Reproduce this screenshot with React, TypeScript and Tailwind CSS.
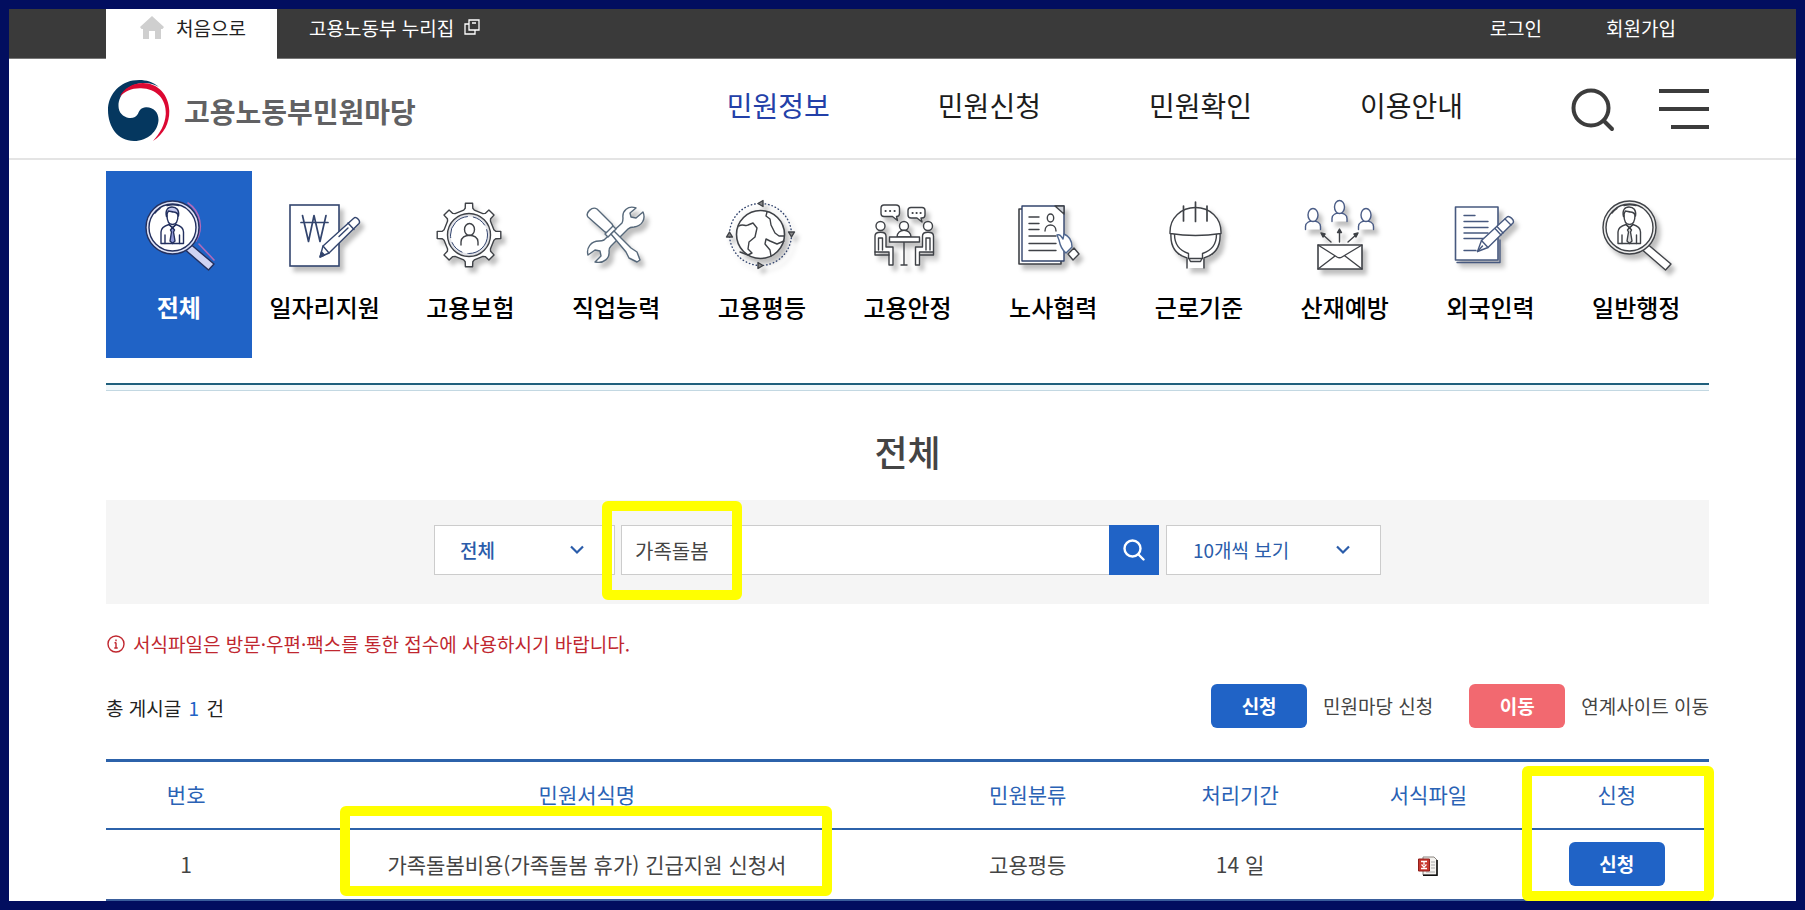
import React, { useState } from 'react';

const INK = '#3f4247';
const NAVY = '#33456e';

interface IconProps {
  active?: boolean;
}

interface Category {
  label: string;
  Icon: React.FC<IconProps>;
}

const IconFrame: React.FC<{ stroke?: string; plain?: boolean; children: React.ReactNode }> = ({
  stroke = INK,
  plain = false,
  children
}) => (
  <svg
    viewBox="0 0 76 76"
    className={`h-[76px] w-[76px] overflow-visible ${plain ? '' : 'drop-shadow-[4px_5px_2px_rgba(0,0,0,0.25)]'}`}
    fill="#fff"
    stroke={stroke}
    strokeWidth={1.4}
    strokeLinecap="round"
    strokeLinejoin="round"
    aria-hidden="true"
  >
    {children}
  </svg>
);

const MagnifierIcon: React.FC<IconProps> = ({ active = false }) => (
  <IconFrame stroke={active ? '#23305f' : INK} plain={active}>
    {active && (
      <g fill="none" stroke="#b06bb8" strokeWidth={1.6}>
        <path d="M47 5a28 28 0 0 1 8 38" />
        <path d="M58 46l15 16" />
      </g>
    )}
    <path d="M45 52.5l5.500-5.500L73 66l-5.500 6z" fill={active ? '#cfd3f3' : '#fff'} />
    <circle cx="31.500" cy="29.500" r="26.500" fill={active ? '#dfe3f7' : '#eee'} />
    <circle cx="31.500" cy="29.500" r="23.500" />
    <path d="M19 10.500a23 23 0 0 0-5 4.500M26 7.500a23 23 0 0 1 12 0" fill="none" />
    {/* person */}
    <path d="M20 45.500V34c0-4 3-6 8-7.500l3.500 3 3.500-3c5 1.500 7.500 3.500 7.500 7.500v11.500z" />
    <path d="M24 37v8.500M38.500 37v8.500" fill="none" />
    <path d="M31.500 29.500l-2 2.500 1 2-1.500 9 2.500 2.500 2.500-2.500-1.500-9 1-2z" fill={active ? '#8f96d6' : '#ddd'} />
    <path d="M28 26.500l3.500 3.500 3.500-3.500" fill="none" />
    <path d="M26 17c0 6 2 9.500 5.500 9.500S37 23 37 17" />
    <path
      d="M25.500 18.500c-1.500-6 1-9.500 5.500-9.500s7.500 3 6.500 9c-1-3-3-4-5-4-1 0-4-1-5-1-1 1-1.500 3-2 5.500z"
      fill={active ? '#c3c7ee' : '#fff'}
    />
  </IconFrame>
);

const WonIcon = () => (
  <IconFrame stroke={NAVY}>
    <rect x="3" y="7" width="49" height="61" strokeLinejoin="miter" strokeWidth={1.6} />
    <path d="M15.500 17.500l6 26 5.500-26 6 26 6-26M14 24.500h27" fill="none" strokeWidth={1.7} />
    <path d="M33 59l3-11 31-28c2-2 7 3 5 5.500L42 55z" />
    <path d="M36 48l6 7M61 25l6 6.500M52 38.500l9-8.500" fill="none" />
    <path d="M33 59l1.500-5 3 3z" fill={NAVY} />
  </IconFrame>
);

// eight teeth, four corners each
const gearPoints = Array.from({ length: 8 })
  .flatMap((_, tooth) =>
    [[-12, 25.5], [-8, 27], [-6.5, 32], [6.5, 32], [8, 27], [12, 25.5]].map(([offset, radius]) => {
      const angle = ((tooth * 45 + offset) * Math.PI) / 180;
      return `${(37 + radius * Math.sin(angle)).toFixed(1)},${(37 - radius * Math.cos(angle)).toFixed(1)}`;
    })
  )
  .join(' ');

const GearIcon = () => (
  <IconFrame>
    <polygon points={gearPoints} />
    <circle cx="37" cy="37" r="21.500" fill="#e3e4e9" />
    <circle cx="37" cy="37" r="18.500" stroke={NAVY} strokeWidth={1} strokeDasharray="30 6 14 5" />
    <ellipse cx="37.500" cy="31.500" rx="5" ry="6" />
    <path d="M29 47v-3c0-9 17-9 17 0v3" fill="none" />
  </IconFrame>
);

const ToolsIcon = () => (
  <IconFrame stroke="#56687a">
    {/* wrench */}
    <path d="M58 10c-8-3-14 3-13 10 0 2 0 3-1 5L26 42c-2 1-3 1-5 1-8 0-13 7-11 14l7-5 5 1 1 5-6 6c9 2 15-4 14-11 0-2 0-3 2-5l17-17c2-2 4-2 6-2 8-1 12-8 9-15l-7 6-5-1-1-4z" />
    {/* screwdriver */}
    <path d="M10 19c-3-4 4-11 9-8l15 15c2 3 1 5-1 7s-4 2-6 1z" />
    <path d="M27 36l8-8 3 3-8 8z" />
    <path d="M33 36l3-3 17 17 6 4 3 8-3 2-8-4-3-6z" />
  </IconFrame>
);

const GlobeIcon = () => (
  <IconFrame>
    <circle cx="36.500" cy="36.500" r="31" fill="none" stroke={NAVY} strokeWidth={1.4} strokeDasharray="0.500 3" />
    <circle cx="36.500" cy="36.500" r="24" strokeWidth={1.6} />
    <path d="M15 28c4-3 6 1 9-1l5-2 4 5-2 9-6 5-1 7 4 4-4 2-8-3" fill="none" />
    <path d="M43 14l-1 4 4 3 1 6 4 8 4 3h5M60 43l-7 3-7-3-4-2-1 5 5 6 1 6" fill="none" />
    <path d="M34 5.500l5-3v6zM39 67.500l-5 3v-6zM5.500 34l-3 5h6zM67.500 39l3-5h-6z" fill="#888" />
  </IconFrame>
);

const MeetingIcon = () => (
  <IconFrame>
    <path d="M14 7h12q3.500 0 3.500 3.500v5q0 3-3 3l1 4-5-4H14q-3 0-3-3v-5Q11 7 14 7z" />
    <path d="M41 9.500h11q3 0 3 3V17q0 3-3 3h-1l1 4-5-4h-6q-3 0-3-3v-4.500q0-3 3-3z" />
    <path d="M15.500 13h.2M20 13h.2M24.500 13h.2M42.500 15h.2M46.500 15h.2M50.500 15h.2" strokeWidth={2} />
    <circle cx="10.500" cy="28" r="4.500" />
    <path d="M5 54V38c0-5 11-5 11 0v11h7v18h-4V54z" />
    <path d="M8.500 52V40h4v12" fill="none" />
    <path d="M5 54v3h14" fill="none" />
    <circle cx="58" cy="28" r="4.500" />
    <path d="M63.500 54V38c0-5-11-5-11 0v11h-7v18h4V54z" />
    <path d="M60 52V40h-4v12M63.500 54v3H50" fill="none" />
    <circle cx="34" cy="28" r="4.500" />
    <path d="M27 39c0-9 14-9 14 0z" />
    <path d="M19.500 39h30v5h-30zM34 44v23M31 67h6" />
  </IconFrame>
);

const ContractIcon = () => (
  <IconFrame>
    <path d="M4 11h42v55H4z" strokeWidth={1.6} />
    <path d="M7 8h42v55H7z" stroke={NAVY} />
    <path d="M40 8l9 8V8z" fill="#cfd3da" />
    <path d="M14 19h10M14 25.500h10M14 31.500h10M14 38h27M14 45.500h27M14 52.500h27" strokeWidth={1.4} />
    <ellipse cx="35.500" cy="20" rx="3.200" ry="4" />
    <path d="M30 33c0-8 11-8 11 0" fill="none" />
    <path d="M42 37c3-1 4 1 6 4l1-5c5 2 8 7 8 13l-6 6c-4-3-6-8-7-13z" stroke="#4f6790" />
    <path d="M53 56l6-6 5 6-6 6z" />
  </IconFrame>
);

const HelmetIcon = () => (
  <IconFrame>
    <path d="M10 36c-1 13 7 22 17 25v9h15v-9c10-3 18-12 17-25" stroke="none" />
    <path d="M10 35c-1 14 6 22 16 25v10M59 35c1 14-6 22-16 25v10" fill="none" />
    <path d="M13.500 36c0 11 5 16 14 19.500v5M55.500 36c0 11-5 16-14 19.500v5" fill="none" />
    <path d="M28 60.500h13l-1.500 3h-10z" />
    <path d="M9 34C9 20 20 9.500 34.500 9.500S60 20 60 34v1.500q-25.500 4-51 0z" />
    <path d="M22.500 8v15M34.500 4v19.500M46 8v15" strokeWidth={1.7} />
  </IconFrame>
);

const MailPeopleIcon = () => (
  <IconFrame>
    {['translate(6 17)', 'translate(32.5 9)', 'translate(59 17)'].map(place => (
      <g key={place} transform={place} stroke="#4a5c86">
        <path d="M-7.500 14.500v-3c0-4 4-5.500 7.500-5.500s7.500 1.500 7.500 5.500v3" />
        <ellipse cx="0" cy="0" rx="5" ry="6.500" />
      </g>
    ))}
    <path d="M11 47h44v24H11z" strokeWidth={1.6} />
    <path d="M11 47l19 12q2.500 1.500 5 0l20-12M11 71l17-13M55 71L38 58" fill="none" />
    <path d="M24 44l-9-8M32.500 44V32.500M41 44l9-8" fill="none" />
    <path d="M14 35l4 1-2 3zM32.500 31l2 3.500h-4zM51 35l-4 1 2 3z" fill={INK} />
  </IconFrame>
);

const WriteIcon = () => (
  <IconFrame stroke="#47597f">
    <path d="M3.500 9H46v53H3.500z" strokeWidth={1.6} />
    <path d="M5 64.500h43V42" fill="none" />
    <path d="M12 17.500h11M12 23.500h24M12 29.500h24M12 35h24M12 40.500h20M12 52.500h12" />
    <path d="M25.500 53.500l4-11L55 19c2-2 8 3 6 6L36 49.500z" />
    <path d="M29.500 42.500l6.500 7M45 28.500l6 6.500M43 30.500l6 6.500M53 21l6 6M25.500 53.500l5-5.500" fill="none" />
  </IconFrame>
);

const CATEGORIES: Category[] = [
  { label: '전체', Icon: MagnifierIcon },
  { label: '일자리지원', Icon: WonIcon },
  { label: '고용보험', Icon: GearIcon },
  { label: '직업능력', Icon: ToolsIcon },
  { label: '고용평등', Icon: GlobeIcon },
  { label: '고용안정', Icon: MeetingIcon },
  { label: '노사협력', Icon: ContractIcon },
  { label: '근로기준', Icon: HelmetIcon },
  { label: '산재예방', Icon: MailPeopleIcon },
  { label: '외국인력', Icon: WriteIcon },
  { label: '일반행정', Icon: MagnifierIcon }
];

const MENU = ['민원정보', '민원신청', '민원확인', '이용안내'];

const FORMS = [
  { no: 1, title: '가족돌봄비용(가족돌봄 휴가) 긴급지원 신청서', group: '고용평등', period: '14 일' }
];

const Chevron = () => (
  <svg viewBox="0 0 14 10" className="pointer-events-none absolute right-[31px] top-5 h-[10px] w-[14px]" fill="none" stroke="#2a5caa" strokeWidth={2.2} aria-hidden="true">
    <path d="M1 1.500l6 6 6-6" />
  </svg>
);

const Emblem = () => (
  <svg viewBox="0 0 64 64" className="h-16 w-16" aria-hidden="true">
    <path
      d="M52 8C44 1 34 0 26 1.500 11 4 1 17 1 31c0 17 10 31 26 31 14 0 24-10 24.500-21 .2-8-5.500-13-12.500-12.700-5 .3-6.500 3-8 6.500-1.500 3-5 4.700-9 4.200-6-1-10.500-5.500-10.500-12C11.500 15 22 5 36 4c6-.3 11 1 16 4z"
      fill="#05375f"
    />
    <path
      d="M12.500 18C17 9 26 4 36 4c15 0 26 12 26.300 28C62.500 44 57 55 46 62c7-8 12-16 12.800-27C59.500 20 49 9.500 34 9.300 25 9 18 12 12.500 18z"
      fill="#dc0832"
    />
  </svg>
);

const FileIcon = () => (
  <svg viewBox="0 0 20 20" className="mx-auto h-5 w-5" aria-hidden="true">
    <path d="M5 1h11l3 3v15H5z" fill="#f4f2ef" stroke="#8a8580" />
    <path d="M19 4v15.200H5" fill="none" stroke="#111" strokeWidth={1.6} />
    <path d="M13 6h4M13 9h4M13 12h4M8 16h9" stroke="#aaa" />
    <path d="M.5 3h11v12H.500z" fill="#c8372f" stroke="#8f1f1b" />
    <path d="M3 5.500h6M6 6v3M3.500 8.500L6 11l2.500-2.500M3 12.500h6" fill="none" stroke="#fff" strokeWidth={1.3} />
  </svg>
);

export default function App() {
  const [active, setActive] = useState(0);
  const [query, setQuery] = useState('가족돌봄');

  return (
    <div
      lang="ko"
      className="min-h-screen border-[9px] border-[#020e5f] bg-white font-['Noto_Sans_CJK_KR','Noto_Sans',sans-serif] text-[19px] leading-7 text-[#444]"
    >
      {/* Utility bar */}
      <div className="flex h-[50px] border-b border-[#777] bg-[#3a3a3a] pl-[97px] pr-[120px] text-white">
        <a href="#home" className="-mb-px flex w-[171px] items-start gap-3 bg-white pl-[34px] pt-[5px] text-[#222]">
          <svg viewBox="0 0 24 23" className="mt-[2px] h-[23px] w-6" fill="#cfcfcf" aria-hidden="true">
            <path d="M12 0l12 11-1.500 2H21v10h-6v-8H9v8H3V13H1.500L0 11z" />
          </svg>
          <span>처음으로</span>
        </a>
        <a href="#moel" className="flex items-start gap-[10px] pl-8 pt-[5px]">
          고용노동부 누리집
          <svg viewBox="0 0 16 16" className="mt-[5px] h-4 w-4" fill="none" stroke="#fff" strokeWidth={1.3} aria-hidden="true">
            <path d="M5 1h10v10H5zM5 5H1v10h10v-4M8 4h4" />
          </svg>
        </a>
        <div className="ml-auto flex gap-[64px] pt-[5px]">
          <a href="#login">로그인</a>
          <a href="#join">회원가입</a>
        </div>
      </div>

      {/* Header */}
      <header className="flex h-[101px] items-center border-b-2 border-[#e4e4e4] pl-[98px] pr-[87px]">
        <a href="#top" className="flex items-center gap-[13px] pt-1 text-[28px] font-bold leading-10 text-[#616163]">
          <Emblem />
          고용노동부민원마당
        </a>
        <nav className="ml-auto flex gap-[108px] pb-2 text-[28px] leading-10 text-[#1c1c1c]">
          {MENU.map((item, i) => (
            <a key={item} href={`#menu${i}`} className={i === 0 ? 'text-[#2340a8]' : ''}>
              {item}
            </a>
          ))}
        </nav>
        <button type="button" aria-label="검색" className="ml-[108px] pt-[2px]">
          <svg viewBox="0 0 44 44" className="h-11 w-11" fill="none" stroke="#3c3c3c" strokeWidth={4} strokeLinecap="round" aria-hidden="true">
            <circle cx="20" cy="20" r="17.500" />
            <path d="M33 33l8 8" />
          </svg>
        </button>
        <button type="button" aria-label="전체메뉴" className="ml-11 flex flex-col items-end gap-[14px]">
          <span className="h-1 w-[50px] bg-[#3c3c3c]" />
          <span className="h-1 w-[50px] bg-[#3c3c3c]" />
          <span className="h-1 w-[38px] bg-[#3c3c3c]" />
        </button>
      </header>

      <main className="pl-[97px] pr-[87px] pt-[11px]">
        {/* Categories */}
        <div className="flex">
          {CATEGORIES.map(({ label, Icon }, i) => (
            <button
              key={label}
              type="button"
              onClick={() => setActive(i)}
              className={`flex h-[187px] flex-1 flex-col items-center whitespace-nowrap pt-[27px] text-2xl leading-8
                ${active === i ? 'bg-[#2063c6] font-bold text-white' : 'font-medium text-black'}`}
            >
              <Icon active={active === i} />
              <span className="mt-[17px]">{label}</span>
            </button>
          ))}
        </div>
        <div className="mt-[25px] h-2 border-b border-t-2 border-b-[#c3d8e2] border-t-[#1f5f7c] bg-[#f0f7fa]" />

        <h1 className="mt-[34px] text-center text-4xl font-medium leading-[52px] text-[#444]">전체</h1>

        {/* Search */}
        <form onSubmit={e => e.preventDefault()} className="mt-[23px] flex justify-center bg-[#f5f5f5] pb-[29px] pt-[25px] text-[#2a5caa]">
          <div className="relative">
            <select aria-label="민원분류" className="h-[50px] w-[181px] appearance-none border border-[#ccc] bg-white pl-[25px] font-medium">
              <option>전체</option>
            </select>
            <Chevron />
          </div>
          <div className="relative ml-[6px]">
            <input
              type="text"
              aria-label="검색어"
              value={query}
              onChange={e => setQuery(e.target.value)}
              className="h-[50px] w-[488px] border border-r-0 border-[#ccc] bg-white px-[13px] text-xl text-[#444] focus:outline-none"
            />
            <span className="pointer-events-none absolute -left-[19px] -top-6 h-[99px] w-[140px] rounded-md border-10 border-[#ffff00]" />
          </div>
          <button type="submit" aria-label="검색" className="flex h-[50px] w-[50px] items-center justify-center bg-[#2063c6]">
            <svg viewBox="0 0 22 22" className="h-[22px] w-[22px]" fill="none" stroke="#fff" strokeWidth={2.4} strokeLinecap="round" aria-hidden="true">
              <circle cx="9.500" cy="9.500" r="8" />
              <path d="M15.500 15.500l5 5" />
            </svg>
          </button>
          <div className="relative ml-[7px]">
            <select aria-label="목록 개수" className="h-[50px] w-[215px] appearance-none border border-[#ccc] bg-white pl-[26px]">
              <option>10개씩 보기</option>
            </select>
            <Chevron />
          </div>
        </form>

        <p className="mt-[26px] flex items-center gap-2 pl-px text-[#c0272f]">
          <svg viewBox="0 0 18 18" className="h-[18px] w-[18px]" fill="none" stroke="#c0272f" strokeWidth={1.4} aria-hidden="true">
            <circle cx="9" cy="9" r="8" />
            <path d="M9 4.500v1.800M9 7.500V13M7.500 7.700H9M7.300 13h3.400" />
          </svg>
          서식파일은 방문·우편·팩스를 통한 접수에 사용하시기 바랍니다.
        </p>

        <div className="mt-[26px] flex items-center">
          <p className="pt-1 text-[#222]">
            총 게시글 <span className="mx-[2px] text-[#2063c6]">1</span> 건
          </p>
          <div className="ml-auto flex items-center gap-4">
            <span className="w-24 rounded-md bg-[#2063c6] py-2 text-center font-bold text-white">신청</span>
            <span className="mr-5">민원마당 신청</span>
            <span className="w-24 rounded-md bg-[#f26970] py-2 text-center font-bold text-white">이동</span>
            <span>연계사이트 이동</span>
          </div>
        </div>

        {/* Forms */}
        <table className="mt-[31px] w-full table-fixed border-separate border-spacing-0 text-center text-[21px] leading-8">
          <colgroup>
            <col className="w-[10%]" />
            <col className="w-[40%]" />
            <col className="w-[15%]" />
            <col className="w-[11.5%]" />
            <col className="w-[12%]" />
            <col className="w-[11.5%]" />
          </colgroup>
          <thead>
            <tr className="text-[#2a62b5] *:h-[71px] *:border-b-2 *:border-t-3 *:border-[#2c62aa] *:px-0 *:pb-[2px] *:pt-0 *:font-normal">
              <th scope="col">번호</th>
              <th scope="col">민원서식명</th>
              <th scope="col">민원분류</th>
              <th scope="col">처리기간</th>
              <th scope="col">서식파일</th>
              <th scope="col" className="relative">
                신청
                <span className="pointer-events-none absolute -right-[5px] top-1 h-[135px] w-48 rounded-md border-10 border-[#ffff00]" />
              </th>
            </tr>
          </thead>
          <tbody>
            {FORMS.map(form => (
              <tr key={form.no} className="*:h-[71px] *:border-b-2 *:border-[#3a5e9c] *:px-0 *:pb-[2px] *:pt-0">
                <td>{form.no}</td>
                <td className="relative">
                  <a href="#form">{form.title}</a>
                  <span className="pointer-events-none absolute -top-6 left-[74px] h-[90px] w-[492px] rounded-md border-10 border-[#ffff00]" />
                </td>
                <td>{form.group}</td>
                <td>{form.period}</td>
                <td>
                  <a href="#file" aria-label="서식파일 내려받기" className="block pt-1">
                    <FileIcon />
                  </a>
                </td>
                <td>
                  <button type="button" className="mx-auto block w-24 rounded-md bg-[#2063c6] py-2 text-[19px] font-bold leading-7 text-white">
                    신청
                  </button>
                </td>
              </tr>
            ))}
          </tbody>
        </table>
      </main>
    </div>
  );
}
